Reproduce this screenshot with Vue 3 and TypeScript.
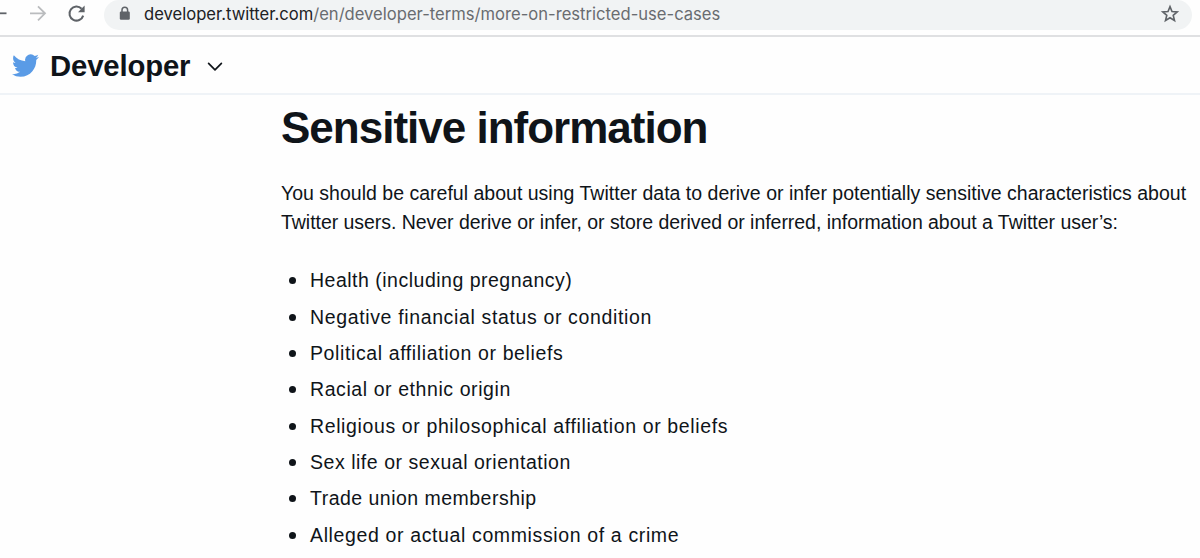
<script setup lang="ts">
interface RestrictedCategory {
  label: string
  tracking: number
}

const items: RestrictedCategory[] = [
  { label: 'Health (including pregnancy)', tracking: 0.5 },
  { label: 'Negative financial status or condition', tracking: 0.64 },
  { label: 'Political affiliation or beliefs', tracking: 0.61 },
  { label: 'Racial or ethnic origin', tracking: 0.58 },
  { label: 'Religious or philosophical affiliation or beliefs', tracking: 0.62 },
  { label: 'Sex life or sexual orientation', tracking: 0.53 },
  { label: 'Trade union membership', tracking: 0.48 },
  { label: 'Alleged or actual commission of a crime', tracking: 0.63 },
]
</script>

<template>
  <div class="page">
    <div class="toolbar">
      <svg class="nav" width="104" height="30" viewBox="0 0 104 30" fill="none">
        <path d="M0 13.3H6.5" stroke="#5f6368" stroke-width="1.8" />
        <path d="M30 13.3H44.5M38 6.3L45 13.3L38 20.3" stroke="#babcbe" stroke-width="1.8" />
        <path d="M81.6 8.8A7 7 0 1 0 83.2 15.6" stroke="#5f6368" stroke-width="2" />
        <path d="M84.6 5.6V12.2H78Z" fill="#5f6368" />
      </svg>
      <div class="address">
        <svg class="lock" width="12" height="16" viewBox="0 0 12 16">
          <path d="M3 6.5V4A2.8 2.8 0 0 1 8.6 4V6.5" fill="none" stroke="#5f6368" stroke-width="1.5" />
          <rect x="0.8" y="5.6" width="10" height="8.2" rx="1.2" fill="#5f6368" />
        </svg>
        <span class="url"><span class="host">developer.twitter.com</span>/en/developer-terms/more-on-restricted-use-cases</span>
        <svg class="star" width="20" height="20" viewBox="0 0 20 20">
          <path d="M10 2.6L12 7.5L17.2 7.9L13.2 11.3L14.5 16.5L10 13.7L5.5 16.5L6.8 11.3L2.8 7.9L8 7.5Z" fill="none" stroke="#5f6368" stroke-width="1.6" />
        </svg>
      </div>
    </div>
    <header class="header">
      <svg class="bird" width="27" height="23" viewBox="0 0 24 20" preserveAspectRatio="none" fill="#5a9be6">
        <path d="M23.95 2.57a10 10 0 0 1-2.82.77 4.96 4.96 0 0 0 2.16-2.72c-.95.55-2 .96-3.13 1.18a4.92 4.92 0 0 0-8.38 4.48C7.69 6.1 4.07 4.13 1.64 1.16a4.82 4.82 0 0 0-.67 2.48c0 1.71.87 3.21 2.19 4.1a4.9 4.9 0 0 1-2.23-.62v.06a4.92 4.92 0 0 0 3.95 4.83 5 5 0 0 1-2.21.08 4.94 4.94 0 0 0 4.6 3.42A9.87 9.87 0 0 1 0 17.54a13.99 13.99 0 0 0 7.55 2.21c9.05 0 14-7.5 14-13.98 0-.21 0-.42-.02-.63a9.94 9.94 0 0 0 2.46-2.55z" />
      </svg>
      <span class="brand">Developer</span>
      <svg class="chevron" width="16" height="10" viewBox="0 0 16 10" fill="none">
        <path d="M1.6 1.4L8 7.8L14.4 1.4" stroke="#0f1419" stroke-width="1.7" stroke-linecap="round" stroke-linejoin="round" />
      </svg>
    </header>
    <main class="content">
      <h1>Sensitive information</h1>
      <p>
        <span class="line first">You should be careful about using Twitter data to derive or infer potentially sensitive characteristics about</span>
        <span class="line second">Twitter users. Never derive or infer, or store derived or inferred, information about a Twitter user’s:</span>
      </p>
      <ul>
        <li v-for="item in items" :key="item.label" :style="{ letterSpacing: item.tracking + 'px' }">{{ item.label }}</li>
      </ul>
    </main>
  </div>
</template>

<style>
body { margin: 0; background: #fff; }
</style>

<style scoped>
.page {
  width: 1200px;
  height: 558px;
  overflow: hidden;
  background: #fefefe;
  color: #0f1419;
  font-family: "Liberation Sans", Arial, sans-serif;
}
.toolbar {
  box-sizing: border-box;
  height: 37px;
  display: flex;
  align-items: flex-start;
  border-bottom: 2px solid #dfe0e2;
}
.nav { flex: none; }
.address {
  box-sizing: border-box;
  width: 1088px;
  height: 30px;
  padding: 0 12px 0 15px;
  display: flex;
  align-items: flex-start;
  background: #f1f3f4;
  border-radius: 15px;
}
.lock { flex: none; margin: 6px 13px 0 0; }
.url {
  flex: 1;
  color: #696c70;
  font-family: Inter, sans-serif;
  font-size: 16.6px;
  line-height: 28px;
  white-space: nowrap;
}
.host { color: #202124; }
.star { flex: none; margin-top: 4px; }
.header {
  box-sizing: border-box;
  height: 58px;
  display: flex;
  align-items: center;
  padding-left: 12px;
  border-bottom: 2px solid #eff3f7;
}
.brand {
  width: 140px;
  margin-left: 11px;
  padding-top: 1px;
  font-size: 29.3px;
  font-weight: 700;
  line-height: 55px;
  letter-spacing: -0.15px;
}
.chevron { margin: 3px 0 0 17px; }
.content { padding-left: 281px; }
h1 {
  margin: 8px 0 0;
  font-size: 44px;
  line-height: 50px;
  letter-spacing: -1px;
}
p { margin: 26px 0 0; font-size: 19.5px; line-height: 29px; }
.line { display: block; white-space: nowrap; }
.first { letter-spacing: 0.01px; }
.second { letter-spacing: -0.04px; }
ul { margin: 25.8px 0 0; padding: 0; list-style: none; }
li {
  display: flex;
  align-items: center;
  height: 36.3px;
  font-size: 19.5px;
  white-space: nowrap;
}
li::before {
  content: "";
  width: 7px;
  height: 7px;
  margin: 0 14px 0 8px;
  border-radius: 50%;
  background: #0f1419;
}
</style>
